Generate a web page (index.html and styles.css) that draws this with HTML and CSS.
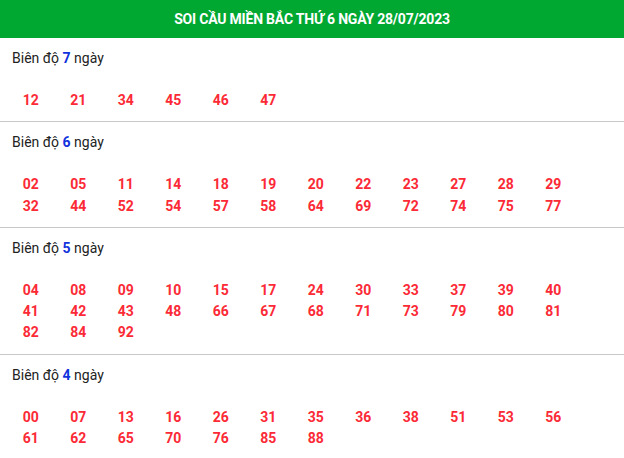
FILE: index.html
```html
<!DOCTYPE html>
<html lang="vi">

<head>
    <meta charset="UTF-8">
    <meta name="viewport" content="width=device-width, initial-scale=1.0">
    <title>Soi cầu miền Bắc</title>
    <link rel="stylesheet" href="styles.css">
</head>

<body>
    <div class="box">
        <h2 class="box-title">SOI CẦU MIỀN BẮC THỨ 6 NGÀY 28/07/2023</h2>

        <!-- Biên độ 7 -->
        <div class="range">
            <p class="range-label">Biên độ <strong>7</strong> ngày</p>
            <ul class="nums">
                <li>12</li><li>21</li><li>34</li><li>45</li><li>46</li><li>47</li>
            </ul>
        </div>

        <!-- Biên độ 6 -->
        <div class="range">
            <p class="range-label">Biên độ <strong>6</strong> ngày</p>
            <ul class="nums">
                <li>02</li><li>05</li><li>11</li><li>14</li><li>18</li><li>19</li>
                <li>20</li><li>22</li><li>23</li><li>27</li><li>28</li><li>29</li>
                <li>32</li><li>44</li><li>52</li><li>54</li><li>57</li><li>58</li>
                <li>64</li><li>69</li><li>72</li><li>74</li><li>75</li><li>77</li>
            </ul>
        </div>

        <!-- Biên độ 5 -->
        <div class="range">
            <p class="range-label">Biên độ <strong>5</strong> ngày</p>
            <ul class="nums">
                <li>04</li><li>08</li><li>09</li><li>10</li><li>15</li><li>17</li>
                <li>24</li><li>30</li><li>33</li><li>37</li><li>39</li><li>40</li>
                <li>41</li><li>42</li><li>43</li><li>48</li><li>66</li><li>67</li>
                <li>68</li><li>71</li><li>73</li><li>79</li><li>80</li><li>81</li>
                <li>82</li><li>84</li><li>92</li>
            </ul>
        </div>

        <!-- Biên độ 4 -->
        <div class="range">
            <p class="range-label">Biên độ <strong>4</strong> ngày</p>
            <ul class="nums">
                <li>00</li><li>07</li><li>13</li><li>16</li><li>26</li><li>31</li>
                <li>35</li><li>36</li><li>38</li><li>51</li><li>53</li><li>56</li>
                <li>61</li><li>62</li><li>65</li><li>70</li><li>76</li><li>85</li>
                <li>88</li>
            </ul>
        </div>
    </div>
</body>

</html>
```

FILE: styles.css
```css
body {
    margin: 0;
    font-family: Roboto, 'Liberation Sans', sans-serif;
    font-size: 14px;
    color: #222;
    background: #fff;
}

.box-title {
    margin: 0;
    height: 38px;
    line-height: 38px;
    background-color: #00a832;
    color: #fff;
    font-size: 14px;
    font-weight: 700;
    text-align: center;
    letter-spacing: -0.2px;
}

.range {
    padding: 10px 12px 10px;
    border-bottom: 1px solid #c8c8c8;
}

.range:last-child {
    border-bottom: none;
}

.range-label {
    margin: 0;
    line-height: 20px;
}

.range-label strong {
    color: #1133dd;
}

.nums {
    list-style: none;
    margin: 22px 0 0 -5px;
    padding: 0;
    display: grid;
    grid-template-columns: repeat(12, 47.5px);
}

.nums li {
    line-height: 21.3px;
    text-align: center;
    font-weight: 700;
    color: #fb2a36;
}
```
